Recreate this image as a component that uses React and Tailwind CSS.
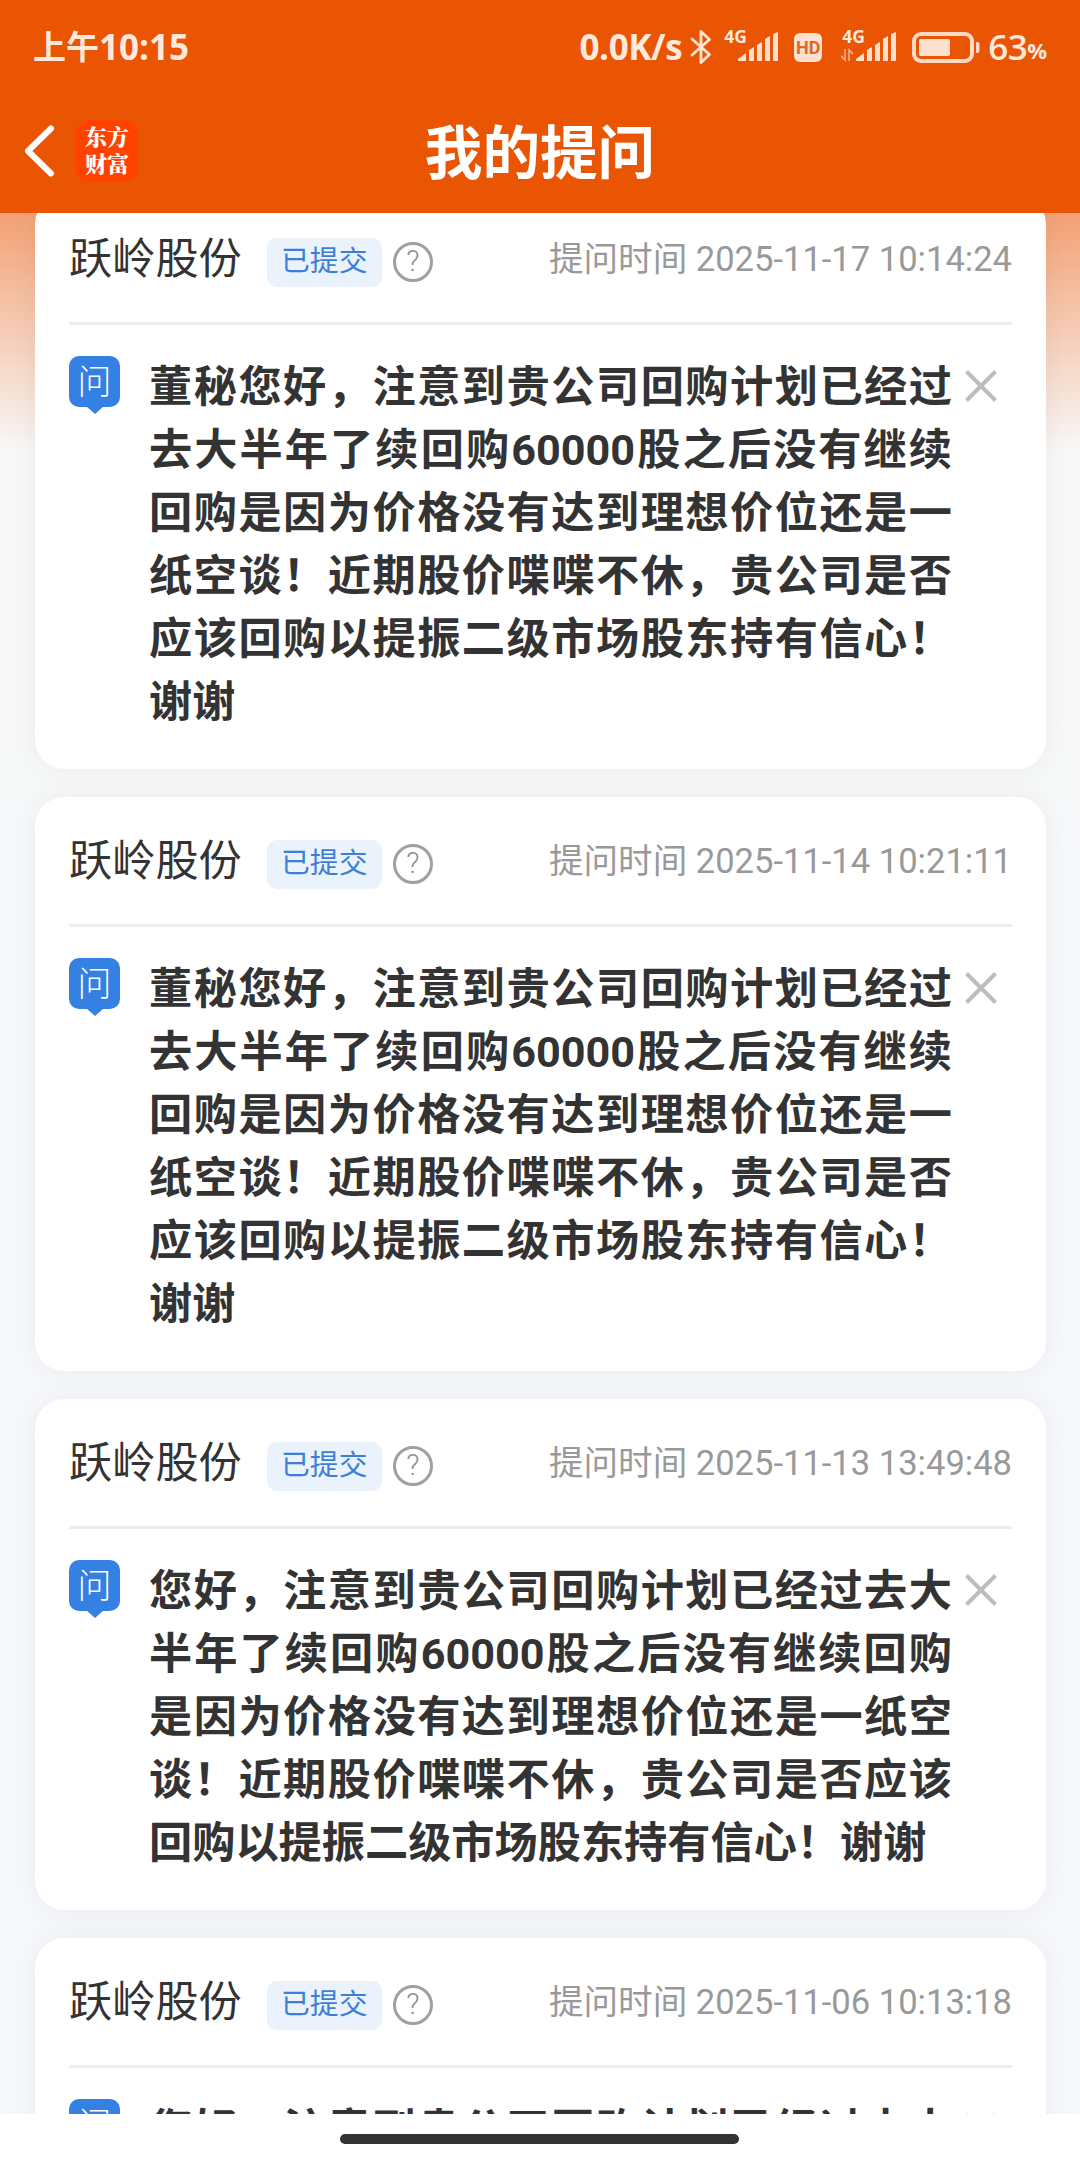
import React from "react";

const LONG_QUESTION =
  "董秘您好，注意到贵公司回购计划已经过去大半年了续回购60000股之后没有继续回购是因为价格没有达到理想价位还是一纸空谈！近期股价喋喋不休，贵公司是否应该回购以提振二级市场股东持有信心！谢谢";
const SHORT_QUESTION =
  "您好，注意到贵公司回购计划已经过去大半年了续回购60000股之后没有继续回购是因为价格没有达到理想价位还是一纸空谈！近期股价喋喋不休，贵公司是否应该回购以提振二级市场股东持有信心！谢谢";

const questions = [
  { id: 1, time: "2025-11-17 10:14:24", text: LONG_QUESTION },
  { id: 2, time: "2025-11-14 10:21:11", text: LONG_QUESTION },
  { id: 3, time: "2025-11-13 13:49:48", text: SHORT_QUESTION },
  { id: 4, time: "2025-11-06 10:13:18", text: SHORT_QUESTION },
];

const Bluetooth = () => (
  <svg className="h-9 w-[22px]" viewBox="0 0 22 36" fill="none">
    <path
      d="M2 10 L19.5 25.5 L11 33.5 V2.5 L19.5 10.5 L2 26"
      stroke="#ffe3d3"
      strokeWidth="2.8"
      strokeLinejoin="round"
      strokeLinecap="round"
    />
  </svg>
);

const Signal = ({ data }) => (
  <div className="relative h-9 w-[57px]">
    <svg className="h-9 w-[57px]" viewBox="0 0 57 36" fill="#ffe0cf">
      <path d="M15 32 V30 L23 24 V32 Z" />
      <path d="M26 32 V21 L31 18 V32 Z" />
      <path d="M34 32 V16 L39 13 V32 Z" />
      <path d="M42 32 V10 L47 7 V32 Z" />
      <path d="M50 32 V5 L55 3 V32 Z" />
      {data && (
        <path
          d="M4 20 V31 L0 27 M8 32 V21 L12 25"
          fill="none"
          stroke="#f6a57c"
          strokeWidth="1.8"
        />
      )}
    </svg>
    <span className="absolute -top-px left-[1px] text-[17.5px] leading-[17px] font-bold">
      4G
    </span>
  </div>
);

const Battery = () => (
  <svg className="h-[31px] w-[69px]" viewBox="0 0 69 31" fill="none">
    <rect x="2" y="2" width="58" height="27" rx="7" stroke="#ffd9c5" strokeWidth="4" />
    <rect x="7" y="7" width="31" height="17" rx="2" fill="#ffe0cf" />
    <path d="M64 10 h1.5 a2 2 0 0 1 2 2 v7 a2 2 0 0 1 -2 2 h-1.5 z" fill="#ffd9c5" />
  </svg>
);

const StatusBar = () => (
  <div className="flex h-[94px] items-center pr-[33px] pl-[33px] text-[#ffe9dc]">
    <div className="flex items-center font-['Open_Sans','Noto_Sans_CJK_SC',sans-serif] text-[35px] leading-[48px] font-bold">
      <span className="text-[33px]">上午</span>
      <span>10:15</span>
    </div>
    <div className="ml-auto flex items-center font-['Open_Sans',sans-serif]">
      <span className="text-[35px] leading-[48px] font-bold tracking-[-0.4px]">0.0K/s</span>
      <div className="ml-[8px]">
        <Bluetooth />
      </div>
      <div className="ml-[11px]">
        <Signal />
      </div>
      <span className="mr-[19px] ml-[14px] flex h-[29px] w-[28px] items-center justify-center rounded-[6px] bg-[#ffe0cf] font-['Roboto',sans-serif] text-[18px] font-bold text-[#d9692c]">
        HD
      </span>
      <Signal data />
      <div className="ml-[14px] flex">
        <Battery />
      </div>
      <span className="ml-[7px] text-[35px] leading-[48px] font-semibold tracking-[-0.5px]">
        63
      </span>
      <span className="mt-[7px] text-[22px] font-bold">%</span>
    </div>
  </div>
);

const TitleBar = () => (
  <div className="grid h-[117px] grid-cols-3 items-center">
    <div className="-mt-[3px] flex items-center pl-6">
      <svg className="h-[52px] w-[31px]" viewBox="0 0 31 52" fill="none">
        <path
          d="M27 3.5 L4 26 L27 48.5"
          stroke="#fff"
          strokeWidth="6"
          strokeLinecap="round"
          strokeLinejoin="round"
        />
      </svg>
      <div className="ml-[21px] flex h-[62px] w-[62px] flex-col items-center justify-center rounded-[14px] bg-[#ff4200] pb-1 font-['Noto_Serif_CJK_SC','Noto_Sans_CJK_SC',sans-serif] text-[22px] leading-[27px] font-black text-white">
        <span>东方</span>
        <span>财富</span>
      </div>
    </div>
    <h1 className="mt-[5px] text-center text-[57.6px] leading-[70px] font-bold whitespace-nowrap text-white">
      我的提问
    </h1>
  </div>
);

const AskBadge = () => (
  <div className="relative mt-[31px] flex h-[51px] w-[51px] shrink-0 items-center justify-center rounded-[10px] bg-[#3480e3] text-[34px] leading-none text-white">
    <span className="leading-[50px] font-light">问</span>
    <svg className="absolute top-[50px] left-[17px] h-2 w-[18px]" viewBox="0 0 18 8">
      <path d="M0 0 H18 L9 8 Z" fill="#3480e3" />
    </svg>
  </div>
);

const QuestionCard = ({ item }) => (
  <article className="rounded-[29px] bg-white px-[34px] pb-[35px] shadow-[0_0_29px_rgba(0,0,0,0.06)]">
    <header className="flex h-[130px] items-start border-b-[3px] border-[#ededed]">
      <h2 className="mt-[34px] text-[43.2px] leading-[62px] text-[#333]">跃岭股份</h2>
      <span className="mt-[43px] ml-[25px] flex h-[49px] w-[115px] justify-center rounded-[10px] bg-[#eaf2fc] text-[28.8px] leading-[46px] text-[#3d7fd6]">
        已提交
      </span>
      <span className="mt-[47px] ml-[11px] flex h-10 w-10 items-center justify-center rounded-full border-[3px] border-[#a0a0a0] pb-px text-[29px] leading-none font-light text-[#909090]">
        ?
      </span>
      <time className="mt-[39px] ml-auto text-[34.56px] leading-[50px] whitespace-nowrap text-[#999]">
        提问时间 {item.time}
      </time>
    </header>
    <div className="flex items-start">
      <AskBadge />
      <p className="mt-[31px] ml-[29px] w-[803px] text-justify text-[43.2px] leading-[63px] font-bold text-[#333]">
        {item.text}
      </p>
      <svg className="mt-[45px] ml-[13px] h-8 w-8" viewBox="0 0 32 32">
        <path d="M1.5 1.5 L30.5 30.5 M30.5 1.5 L1.5 30.5" stroke="#bdbdbd" strokeWidth="4" />
      </svg>
    </div>
  </article>
);

export default function App() {
  return (
    <div className="flex h-[2158px] w-[1080px] flex-col overflow-hidden bg-white font-['Roboto','Noto_Sans_CJK_SC',sans-serif]">
      <div className="relative z-10 h-[213px] shrink-0 bg-[#ea5504]">
        <StatusBar />
        <TitleBar />
      </div>
      <main className="h-[1901px] shrink-0 overflow-hidden bg-[#f7f8fa] bg-[linear-gradient(to_bottom,#f3a174_0px,#f8f8f8_238px,#f8f8f8_500px,#f6f8fb_750px)] pr-[34px] pl-[35px]">
        <div className="-mt-[18px] flex flex-col gap-7">
          {questions.map((item) => (
            <QuestionCard key={item.id} item={item} />
          ))}
        </div>
      </main>
      <div className="flex h-[44px] shrink-0 justify-center bg-white pt-5">
        <div className="mr-[2px] h-[10px] w-[399px] rounded-full bg-[#333]" />
      </div>
    </div>
  );
}
